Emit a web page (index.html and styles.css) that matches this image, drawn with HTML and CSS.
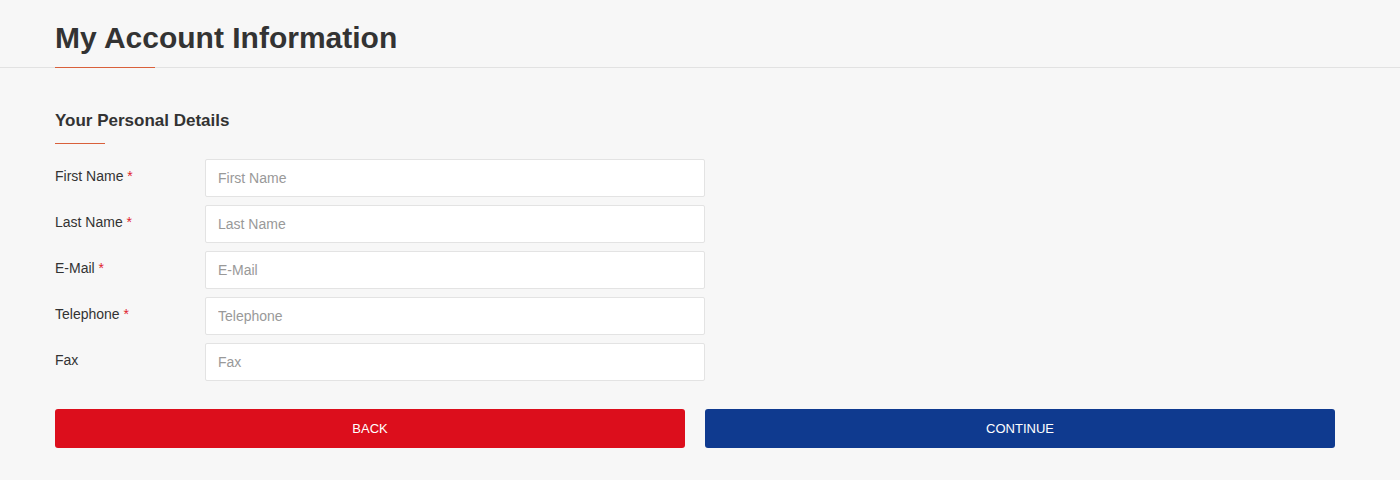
FILE: index.html
```html
<!DOCTYPE html>
<html lang="en">
<head>
    <meta charset="UTF-8">
    <meta name="viewport" content="width=device-width, initial-scale=1.0">
    <title>My Account Information</title>
    <link rel="stylesheet" href="styles.css">
</head>
<body>
    <div class="page-head">
        <div class="wrap">
            <h1 class="page-title">My Account Information</h1>
        </div>
    </div>

    <div class="wrap">
        <form class="account-form">
            <h2 class="section-title">Your Personal Details</h2>

            <div class="form-row">
                <label class="form-label" for="firstname">First Name <span class="req">*</span></label>
                <input class="form-input" id="firstname" type="text" placeholder="First Name">
            </div>
            <div class="form-row">
                <label class="form-label" for="lastname">Last Name <span class="req">*</span></label>
                <input class="form-input" id="lastname" type="text" placeholder="Last Name">
            </div>
            <div class="form-row">
                <label class="form-label" for="email">E-Mail <span class="req">*</span></label>
                <input class="form-input" id="email" type="email" placeholder="E-Mail">
            </div>
            <div class="form-row">
                <label class="form-label" for="telephone">Telephone <span class="req">*</span></label>
                <input class="form-input" id="telephone" type="tel" placeholder="Telephone">
            </div>
            <div class="form-row">
                <label class="form-label" for="fax">Fax</label>
                <input class="form-input" id="fax" type="text" placeholder="Fax">
            </div>

            <!-- buttons -->
            <div class="form-buttons">
                <button type="button" class="btn btn-back">BACK</button>
                <button type="submit" class="btn btn-continue">CONTINUE</button>
            </div>
        </form>
    </div>
</body>
</html>
```

FILE: styles.css
```css
body {
    font-family: "Liberation Sans", Arial, sans-serif;
    margin: 0;
    padding: 0;
    background-color: #f7f7f7;
    color: #333;
}
.wrap {
    width: 1280px;
    margin: 0 0 0 55px;
}
.page-head {
    border-bottom: 1px solid #e2e2e2;
}
.page-title {
    position: relative;
    margin: 0;
    padding: 19px 0 11px;
    font-size: 30px;
    line-height: 37px;
    font-weight: bold;
    color: #333;
}
.page-title::after {
    content: "";
    position: absolute;
    left: 0;
    bottom: -1px;
    width: 100px;
    height: 1px;
    background-color: #d9603b;
}
.account-form {
    padding-top: 43px;
}
.section-title {
    margin: 0 0 15px;
    padding-bottom: 13px;
    font-size: 17px;
    line-height: 20px;
    font-weight: bold;
    color: #333;
    position: relative;
}
.section-title::after {
    content: "";
    position: absolute;
    left: 0;
    bottom: 0;
    width: 50px;
    height: 1px;
    background-color: #d9603b;
}
.form-row {
    display: flex;
    align-items: flex-start;
    margin-bottom: 8px;
}
.form-label {
    width: 150px;
    padding-top: 9px;
    font-size: 14px;
    line-height: 16px;
    color: #333;
}
.req {
    color: #e0222e;
}
.form-input {
    box-sizing: border-box;
    width: 500px;
    height: 38px;
    padding: 0 12px;
    border: 1px solid #e3e3e3;
    border-radius: 2px;
    background: #fff;
    font-family: "Liberation Sans", Arial, sans-serif;
    font-size: 14px;
    color: #333;
}
.form-input::placeholder {
    color: #999;
}
.form-buttons {
    display: flex;
    gap: 20px;
    margin-top: 28px;
}
.btn {
    flex: 1;
    height: 39px;
    padding: 0;
    border: none;
    border-radius: 3px;
    color: #fff;
    font-family: "Liberation Sans", Arial, sans-serif;
    font-size: 13px;
    cursor: pointer;
}
.btn-back {
    background-color: #dc0e1c;
}
.btn-continue {
    background-color: #0f3a8f;
}
```
